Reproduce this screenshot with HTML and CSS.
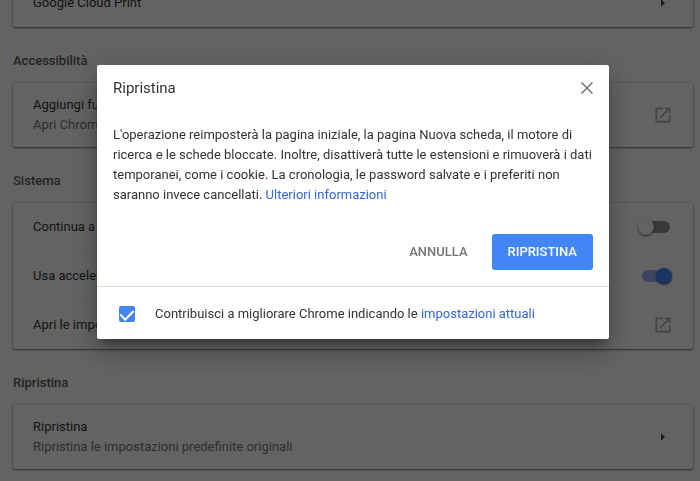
FILE: index.html
```html
<!DOCTYPE html>
<html lang="it">
<head>
  <meta charset="UTF-8" />
  <meta name="viewport" content="width=device-width, initial-scale=1.0"/>
  <title>Impostazioni</title>
  <link rel="stylesheet" href="styles.css">
</head>
<body>

  <main class="settings">
    <section class="card">
      <div class="row">
        <span class="label">Google Cloud Print</span>
        <button class="icon-btn" aria-label="Google Cloud Print">
          <svg class="arrow" viewBox="0 0 4 8"><path d="M0 0l4 4-4 4z"/></svg>
        </button>
      </div>
    </section>

    <h2>Accessibilità</h2>
    <section class="card">
      <div class="row two-line">
        <div class="label">
          <div>Aggiungi funzioni</div>
          <div class="secondary">Apri Chrome Web Store</div>
        </div>
        <a class="icon-btn" href="#" aria-label="Apri Chrome Web Store">
          <svg class="external" viewBox="0 0 24 24"><path d="M19 19H5V5h7V3H3v18h18v-9h-2v7zM14 3v2h3.590l-9.830 9.830 1.410 1.410L19 6.410V10h2V3h-7z"/></svg>
        </a>
      </div>
    </section>

    <h2>Sistema</h2>
    <section class="card">
      <div class="row">
        <label class="label" for="background">Continua a eseguire app</label>
        <input class="toggle" type="checkbox" id="background">
      </div>
      <div class="row">
        <label class="label" for="hardware">Usa accelerazione hardware</label>
        <input class="toggle" type="checkbox" id="hardware" checked>
      </div>
      <div class="row">
        <span class="label">Apri le impostazioni proxy</span>
        <a class="icon-btn" href="#" aria-label="Apri le impostazioni proxy">
          <svg class="external" viewBox="0 0 24 24"><path d="M19 19H5V5h7V3H3v18h18v-9h-2v7zM14 3v2h3.590l-9.830 9.830 1.410 1.410L19 6.410V10h2V3h-7z"/></svg>
        </a>
      </div>
    </section>

    <h2>Ripristina</h2>
    <section class="card">
      <div class="row two-line">
        <div class="label">
          <div>Ripristina</div>
          <div class="secondary">Ripristina le impostazioni predefinite originali</div>
        </div>
        <button class="icon-btn" aria-label="Ripristina">
          <svg class="arrow" viewBox="0 0 4 8"><path d="M0 0l4 4-4 4z"/></svg>
        </button>
      </div>
    </section>
  </main>

  <div class="overlay">
    <div class="dialog" role="dialog" aria-modal="true" aria-labelledby="dialog-title">
      <div class="dialog-header">
        <h1 id="dialog-title">Ripristina</h1>
        <button class="close" aria-label="Chiudi">
          <svg viewBox="0 0 12 12"><path d="M.5 .5l11 11M11.500 .5l-11 11"/></svg>
        </button>
      </div>
      <p class="dialog-body">L'operazione reimposterà la pagina iniziale, la pagina Nuova scheda, il motore di ricerca e le schede bloccate. Inoltre, disattiverà tutte le estensioni e rimuoverà i dati temporanei, come i cookie. La cronologia, le password salvate e i preferiti non saranno invece cancellati. <a href="#">Ulteriori informazioni</a></p>
      <div class="dialog-buttons">
        <button class="cancel">ANNULLA</button>
        <button class="action">RIPRISTINA</button>
      </div>
      <div class="dialog-footer">
        <input class="checkbox" type="checkbox" id="feedback" checked>
        <label for="feedback">Contribuisci a migliorare Chrome indicando le <a href="#">impostazioni attuali</a></label>
      </div>
    </div>
  </div>

</body>
</html>
```
FILE: styles.css
```css
* {
  box-sizing: border-box;
}

body {
  margin: 0;
  height: 100vh;
  overflow: hidden;
  background: #f7f7f7;
  color: #333;
  font-family: Roboto, sans-serif;
  font-size: 13px;
  line-height: 20px;
}

a {
  color: #3367d6;
  text-decoration: none;
}

button {
  border: none;
  background: none;
  padding: 0;
  font-family: inherit;
  font-size: 13px;
  cursor: pointer;
}

/* settings page, scrolled part of the way down */
.settings {
  margin-top: -21px;
  padding: 0 7px 24px 13px;
}

h2 {
  margin: 0;
  padding: 24px 0 12px;
  font-size: 13px;
  font-weight: 500;
  line-height: 20px;
  color: #5a5a5a;
}

.card {
  background: #f7f7f7;
  border-radius: 2px;
  box-shadow: 0 1px 2px rgba(0,0,0,0.5), 0 0 3px rgba(0,0,0,0.2);
}

.row {
  display: flex;
  align-items: center;
  min-height: 48px;
  padding: 0 20px;
}

.row + .row {
  min-height: 49px;
  border-top: 1px solid #efefef;
}

.row.two-line {
  min-height: 64px;
}

.label {
  flex: 1;
}

.secondary {
  color: #757575;
}

.icon-btn {
  display: flex;
  justify-content: center;
  align-items: center;
  width: 20px;
  height: 20px;
}

.arrow {
  width: 4px;
  height: 8px;
  fill: #444;
}

.external {
  width: 20px;
  height: 20px;
  fill: #aaa;
}

.toggle {
  appearance: none;
  display: flex;
  align-items: center;
  width: 28px;
  height: 12px;
  margin: 0 3px;
  border-radius: 6px;
  background: #8c8c8c;
}

.toggle::before {
  content: "";
  width: 16px;
  height: 16px;
  flex: none;
  margin-left: -4px;
  border-radius: 50%;
  background: #f7f7f7;
  box-shadow: 0 1px 2px rgba(0,0,0,0.6);
}

.toggle:checked {
  justify-content: flex-end;
  background: #91b1ec;
}

.toggle:checked::before {
  margin-right: -2px;
  background: #4285f4;
}

/* dialog */
.overlay {
  position: fixed;
  inset: 0;
  padding: 65px 7px 0 13px;
  background: rgba(0,0,0,0.6);
}

.dialog {
  max-width: 512px;
  margin: 0 auto;
  background: #fff;
  border-radius: 2px;
  box-shadow: 0 16px 24px 2px rgba(0,0,0,0.14), 0 6px 30px 5px rgba(0,0,0,0.12), 0 8px 10px -5px rgba(0,0,0,0.4);
}

.dialog-header {
  display: flex;
  justify-content: space-between;
  align-items: center;
  padding: 13px 16px 11px;
}

h1 {
  margin: 0;
  font-size: 15px;
  font-weight: 400;
  line-height: 20px;
}

.close {
  display: flex;
  width: 12px;
  height: 12px;
}

.close svg {
  width: 12px;
  height: 12px;
  fill: none;
  stroke: #757575;
  stroke-width: 1.5;
}

.dialog-body {
  margin: 0;
  padding: 16px 16px 29px;
}

.dialog-buttons {
  display: flex;
  justify-content: flex-end;
  gap: 8px;
  padding: 0 16px 16px;
}

.cancel, .action {
  height: 36px;
  padding: 0 16px 1px;
  border-radius: 3px;
  font-weight: 500;
}

.cancel {
  color: #757575;
}

.action {
  background: #4285f4;
  color: #fff;
}

.dialog-footer {
  display: flex;
  align-items: center;
  gap: 20px;
  padding: 17px 22px 15px;
  border-top: 1px solid #dcdcdc;
}

.checkbox {
  display: flex;
  justify-content: center;
  width: 16px;
  height: 16px;
  margin: 0;
  appearance: none;
  border-radius: 2px;
  background: #4285f4;
}

.checkbox::before {
  content: "";
  width: 6px;
  height: 11px;
  margin-top: 1px;
  border: solid #fff;
  border-width: 0 2px 2px 0;
  transform: rotate(45deg);
}
```
